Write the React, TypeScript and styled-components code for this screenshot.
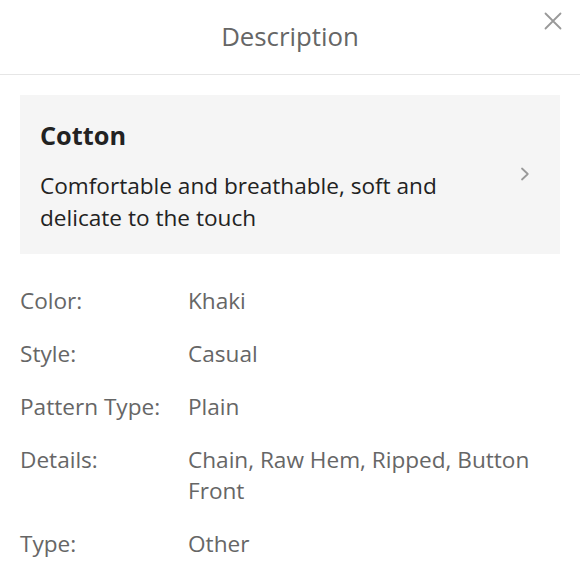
import React from 'react';
import styled, { createGlobalStyle } from 'styled-components';

const GlobalStyle = createGlobalStyle`
  html, body {
    margin: 0;
    padding: 0;
    background: #fff;
  }
  body {
    font-family: 'Open Sans', 'Noto Sans', sans-serif;
    -webkit-font-smoothing: antialiased;
  }
  * {
    box-sizing: border-box;
  }
`;

const attributes = [
  { label: 'Color:', value: 'Khaki' },
  { label: 'Style:', value: 'Casual' },
  { label: 'Pattern Type:', value: 'Plain' },
  { label: 'Details:', value: 'Chain, Raw Hem, Ripped, Button Front' },
  { label: 'Type:', value: 'Other' },
];

const App = () => {
  return (
    <>
      <GlobalStyle />
      <StSheet>
        <StHeader>
          <StTitle>Description</StTitle>
          <StClose aria-label="close">
            <svg width="18" height="18" viewBox="0 0 18 18">
              <path
                d="M1.5 1.5 L16.5 16.5 M16.5 1.5 L1.5 16.5"
                stroke="#999"
                strokeWidth="1.8"
                strokeLinecap="round"
              />
            </svg>
          </StClose>
        </StHeader>

        <StBody>
          <StMaterialCard>
            <StMaterialText>
              <h3>Cotton</h3>
              <p>Comfortable and breathable, soft and delicate to the touch</p>
            </StMaterialText>
            <StChevron>
              <svg width="10" height="14" viewBox="0 0 10 14">
                <path
                  d="M2 1.5 L7.8 7 L2 12.5"
                  stroke="#999"
                  strokeWidth="1.8"
                  fill="none"
                  strokeLinecap="round"
                  strokeLinejoin="round"
                />
              </svg>
            </StChevron>
          </StMaterialCard>

          <StAttrList>
            {attributes.map((attr) => (
              <StAttrRow key={attr.label}>
                <dt>{attr.label}</dt>
                <dd>{attr.value}</dd>
              </StAttrRow>
            ))}
          </StAttrList>
        </StBody>
      </StSheet>
    </>
  );
};

export default App;

const StSheet = styled.div`
  width: 580px;
  min-height: 580px;
  background: #fff;
`;

const StHeader = styled.header`
  position: relative;
  height: 75px;
  display: flex;
  align-items: center;
  justify-content: center;
  border-bottom: 1px solid #e6e6e6;
`;

const StTitle = styled.h2`
  margin: 0;
  font-size: 25.8px;
  font-weight: 400;
  color: #666;
  line-height: 32px;
  padding-bottom: 2px;
`;

const StClose = styled.button`
  position: absolute;
  top: 10px;
  right: 16px;
  width: 22px;
  height: 22px;
  padding: 0;
  border: none;
  background: none;
  display: flex;
  align-items: center;
  justify-content: center;
  cursor: pointer;
`;

const StBody = styled.div`
  padding: 20px 20px 0;
`;

const StMaterialCard = styled.div`
  display: flex;
  align-items: center;
  background: #f5f5f5;
  padding: 24px 30px 20px 20px;
  gap: 20px;
`;

const StMaterialText = styled.div`
  flex: 1;

  h3 {
    margin: 0;
    font-size: 25.3px;
    line-height: 32px;
    font-weight: 700;
    color: #222;
  }

  p {
    margin: 19px 0 0;
    width: 440px;
    font-size: 22.6px;
    line-height: 32px;
    color: #222;
  }
`;

const StChevron = styled.span`
  display: flex;
  align-items: center;
  margin-top: -6px;
`;

const StAttrList = styled.dl`
  margin: 31px 0 0;
  display: flex;
  flex-direction: column;
  gap: 22px;
`;

const StAttrRow = styled.div`
  display: grid;
  grid-template-columns: 168px 1fr;
  font-size: 22.6px;
  line-height: 31px;
  color: #666;

  dt,
  dd {
    margin: 0;
  }
`;
